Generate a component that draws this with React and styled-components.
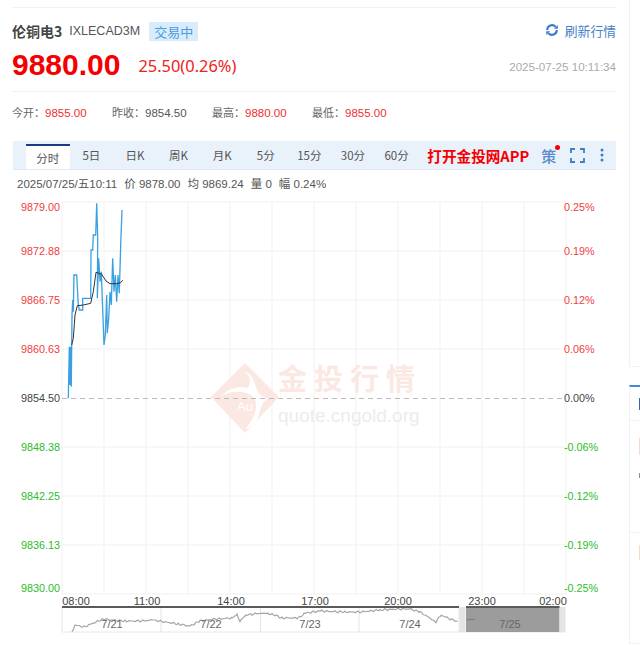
import React from "react";
import styled, { createGlobalStyle } from "styled-components";

const GlobalStyle = createGlobalStyle`
  html, body {
    margin: 0;
    background: #fff;
    font-family: "Microsoft YaHei", "Noto Sans CJK SC", "Liberation Sans", sans-serif;
  }
`;

const Page = styled.div`
  width: 640px;
  height: 645px;
  overflow: hidden;
  display: flex;
`;

const Main = styled.div`
  width: 604px;
  margin-left: 12px;
  flex-shrink: 0;
`;

const Head = styled.div`
  margin-top: 7px;
  border-top: 1px solid #f1f1f1;
  border-bottom: 1px solid #f0f0f0;
  height: 83px;
  display: flex;
  justify-content: space-between;
`;

const HeadLeft = styled.div`
  padding-top: 13px;
`;

const TitleRow = styled.div`
  display: flex;
  align-items: center;
  height: 20px;
`;

const Name = styled.span`
  font-size: 14px;
  font-weight: 700;
  color: #444;
`;

const Code = styled.span`
  font-family: "Liberation Sans", sans-serif;
  font-size: 12.5px;
  color: #555;
  margin-left: 7px;
`;

const Status = styled.span`
  margin-left: 9px;
  padding: 0 5px;
  height: 19px;
  line-height: 19px;
  font-size: 13px;
  color: #4a9be0;
  background: #d9ecfc;
`;

const PriceRow = styled.div`
  display: flex;
  align-items: center;
  margin-top: 7px;
  height: 34px;
`;

const Price = styled.span`
  font-family: "Liberation Sans", sans-serif;
  font-size: 30px;
  font-weight: 700;
  color: #f40000;
`;

const Change = styled.span`
  font-family: "Noto Sans", "Liberation Sans", sans-serif;
  font-size: 16.4px;
  color: #f02020;
  margin-left: 18px;
`;

const HeadRight = styled.div`
  display: flex;
  flex-direction: column;
  align-items: flex-end;
  padding-top: 12px;
`;

const Refresh = styled.div`
  display: flex;
  align-items: center;
  gap: 6px;
  height: 20px;
  font-size: 12.8px;
  color: #4a7fc9;
`;

const Stamp = styled.div`
  margin-top: 20px;
  font-family: "Liberation Sans", sans-serif;
  font-size: 11.6px;
  color: #aaa;
`;

const Stats = styled.div`
  display: flex;
  height: 40px;
  align-items: center;
  font-size: 11px;
  color: #666;
`;

const Stat = styled.div`
  width: 100px;
  white-space: nowrap;
`;

const StatValue = styled.span`
  font-family: "Liberation Sans", sans-serif;
  font-size: 11.5px;
  color: ${(p) => (p.$up ? "#f03030" : "#555")};
`;

const TabBar = styled.div`
  margin-top: 9px;
  margin-left: 1px;
  height: 28px;
  padding-left: 13px;
  display: flex;
  align-items: stretch;
  background: #e9f1fb;
  border-bottom: 1px solid #dfe8f4;
`;

const Tab = styled.div`
  width: 43.6px;
  flex-shrink: 0;
  box-sizing: border-box;
  display: flex;
  align-items: center;
  justify-content: center;
  font-size: 11.5px;
  color: #555;
  margin-top: 3px;
  border-top: 2px solid ${(p) => (p.$active ? "#1c3a86" : "transparent")};
  background: ${(p) => (p.$active ? "#fff" : "transparent")};
  padding-bottom: ${(p) => (p.$active ? "0" : "5px")};
  font-family: "Noto Sans CJK SC", "Liberation Sans", sans-serif;
`;

const AppLink = styled.div`
  margin-left: 9px;
  display: flex;
  align-items: center;
  font-size: 14.6px;
  font-weight: 700;
  color: #f40000;
  white-space: nowrap;
`;

const Strategy = styled.div`
  position: relative;
  margin-left: 12px;
  display: flex;
  align-items: center;
  font-size: 15px;
  font-weight: 500;
  color: #5a8ccb;
`;

const Dot = styled.i`
  position: absolute;
  top: 4px;
  right: -4px;
  width: 5px;
  height: 5px;
  border-radius: 50%;
  background: #f40000;
`;

const IconCell = styled.div`
  display: flex;
  align-items: center;
  margin-left: ${(p) => p.$gap}px;
`;

const Quote = styled.div`
  height: 25px;
  padding-left: 5px;
  display: flex;
  align-items: center;
  gap: 7px;
  font-family: "Liberation Sans", "Noto Sans CJK SC", sans-serif;
  font-size: 11.5px;
  color: #555;
  white-space: nowrap;
`;

const Chart = styled.svg`
  display: block;
  margin-left: -12px;
  width: 600px;
  height: 445px;
  overflow: visible;
`;

const Side = styled.div`
  margin-left: 13px;
  flex: 1;
  display: flex;
  flex-direction: column;
  justify-content: space-between;
`;

const SideTop = styled.div`
  height: 367px;
  box-sizing: border-box;
  border-left: 1px solid #f1f1f1;
  border-bottom: 1px solid #f1f1f1;
`;

const SideCard = styled.div`
  height: 259px;
  margin-bottom: 1px;
  box-sizing: border-box;
  border: 1px solid #f1f1f1;
  border-top: 2px solid #4a86d8;
  border-right: none;
  overflow: hidden;
`;

const SideItem = styled.div`
  height: ${(p) => p.$h}px;
  border-bottom: ${(p) => (p.$line ? "1px solid #f1f1f1" : "none")};
  padding-left: 9px;
  overflow: hidden;
`;

const Blob = styled.div`
  width: 4px;
  height: ${(p) => p.$h}px;
  margin-top: ${(p) => p.$t}px;
  background: ${(p) => p.$c};
`;

const yLabels = [
  ["9879.00", 207, "#f04040", "0.25%"],
  ["9872.88", 251, "#f04040", "0.19%"],
  ["9866.75", 299.5, "#f04040", "0.12%"],
  ["9860.63", 348.5, "#f04040", "0.06%"],
  ["9854.50", 398, "#444", "0.00%"],
  ["9848.38", 446.5, "#2cbc2c", "-0.06%"],
  ["9842.25", 495.5, "#2cbc2c", "-0.12%"],
  ["9836.13", 544.5, "#2cbc2c", "-0.19%"],
  ["9830.00", 588, "#2cbc2c", "-0.25%"],
];

const xLabels = [
  ["08:00", 76],
  ["11:00", 147],
  ["14:00", 231],
  ["17:00", 315],
  ["20:00", 398],
  ["23:00", 482],
  ["02:00", 553],
];

const days = [
  ["7/21", 112],
  ["7/22", 211],
  ["7/23", 310],
  ["7/24", 410],
  ["7/25", 510],
];

const bluePts =
  "205,610 208,455 210,570 212,455 214,575 216,360 218,315 220,350 222,240 230,240 235,330 238,345 248,345 248,310 272,310 273,165 278,165 280,120 287,120 290,25 293,130 292,310 296,190 300,260 304,230 308,345 312,450 316,420 320,300 322,415 326,370 330,290 334,330 338,190 342,290 346,240 350,320 354,240 358,295 362,150 366,45";
const avgPts =
  "215,450 220,430 225,360 232,332 250,330 272,325 280,290 288,232 305,238 318,258 330,266 350,266 362,263 368,256";

// points were read off the 3x crop, so scale them back to page pixels
const scale = (pts) =>
  pts
    .split(" ")
    .map((p) => {
      const [x, y] = p.split(",").map(Number);
      return `${(x / 3).toFixed(1)},${(195 + y / 3).toFixed(1)}`;
    })
    .join(" ");

const navKeys = [
  [72, 632], [75, 625], [84, 627], [96, 622], [103, 619], [112, 620], [125, 621], [140, 621], [153, 620],
  [165, 622], [178, 624], [190, 626], [200, 621], [215, 619], [232, 618], [237, 615], [240, 621], [246, 615],
  [262, 613], [272, 614], [282, 618], [298, 618], [306, 613], [320, 611], [345, 612], [360, 612], [380, 610],
  [398, 609], [410, 609], [420, 612], [433, 620], [436, 622], [441, 615], [450, 619], [459, 622],
];

// the overview line is noisy, so add a small fixed wobble between the key points
const navPts = (() => {
  const out = [];
  for (let i = 0; i < navKeys.length - 1; i++) {
    const [x0, y0] = navKeys[i];
    const [x1, y1] = navKeys[i + 1];
    for (let x = x0; x < x1; x += 1.5) {
      const y = y0 + ((y1 - y0) * (x - x0)) / (x1 - x0);
      out.push(`${x.toFixed(1)},${(y + Math.sin(x * 2.3) * Math.cos(x * 0.9) * 1.1).toFixed(1)}`);
    }
  }
  return out.join(" ");
})();

const RefreshIcon = () => (
  <svg width="14" height="14" viewBox="0 0 16 16" fill="none">
    <path d="M2.5 8a5.5 5.5 0 0 1 9.6-3.7" stroke="#3a78c9" strokeWidth="2.4" />
    <path d="M13.5 8a5.5 5.5 0 0 1-9.6 3.7" stroke="#3a78c9" strokeWidth="2.4" />
    <path d="M14.6 2.2v4.4h-4.4zM1.4 13.8V9.4h4.4z" fill="#3a78c9" />
  </svg>
);

const FullScreen = () => (
  <svg width="15" height="15" viewBox="0 0 15 15" fill="none" stroke="#3f7cc9" strokeWidth="1.8">
    <path d="M1 5V1h4M10 1h4v4M14 10v4h-4M5 14H1v-4" />
  </svg>
);

const Kebab = () => (
  <svg width="4" height="14" viewBox="0 0 4 14" fill="#3f7cc9">
    <circle cx="2" cy="2" r="1.5" />
    <circle cx="2" cy="7" r="1.5" />
    <circle cx="2" cy="12" r="1.5" />
  </svg>
);

const Watermark = () => (
  <g>
    <path d="M245 363 L279 397 L245 433 L211 397 Z" fill="#fbe8e3" />
    <path d="M222 396 C228 388 240 386 248 388 C252 380 250 376 245 372 C254 374 254 384 258 392 C260 396 264 398 268 398 C262 402 260 410 258 418 C255 424 250 428 245 430 C252 420 260 408 254 398 C248 390 230 390 222 396 Z" fill="#fff" />
    <text x="245" y="411" textAnchor="middle" fontSize="12.5" fill="#fff" fontFamily="Liberation Sans">Au</text>
    <text x="278" y="390" fontSize="29" letterSpacing="7" fill="#fbe8e3" fontFamily="Noto Sans CJK SC" fontWeight="700">金投行情</text>
    <text x="278" y="422" fontSize="19" fill="#ececec" fontFamily="Liberation Sans">quote.cngold.org</text>
  </g>
);

const App = () => (
  <Page>
    <GlobalStyle />
    <Main>
      <Head>
        <HeadLeft>
          <TitleRow>
            <Name>伦铜电3</Name>
            <Code>IXLECAD3M</Code>
            <Status>交易中</Status>
          </TitleRow>
          <PriceRow>
            <Price>9880.00</Price>
            <Change>25.50(0.26%)</Change>
          </PriceRow>
        </HeadLeft>
        <HeadRight>
          <Refresh>
            <RefreshIcon />
            刷新行情
          </Refresh>
          <Stamp>2025-07-25 10:11:34</Stamp>
        </HeadRight>
      </Head>
      <Stats>
        <Stat>今开：<StatValue $up>9855.00</StatValue></Stat>
        <Stat>昨收：<StatValue>9854.50</StatValue></Stat>
        <Stat>最高：<StatValue $up>9880.00</StatValue></Stat>
        <Stat>最低：<StatValue $up>9855.00</StatValue></Stat>
      </Stats>
      <TabBar>
        {["分时", "5日", "日K", "周K", "月K", "5分", "15分", "30分", "60分"].map((t, i) => (
          <Tab key={t} $active={i === 0}>{t}</Tab>
        ))}
        <AppLink>打开金投网APP</AppLink>
        <Strategy>
          策
          <Dot />
        </Strategy>
        <IconCell $gap={14}><FullScreen /></IconCell>
        <IconCell $gap={15}><Kebab /></IconCell>
      </TabBar>
      <Quote>
        <span>2025/07/25/五10:11</span>
        <span>价 9878.00</span>
        <span>均 9869.24</span>
        <span>量 0</span>
        <span>幅 0.24%</span>
      </Quote>
      <Chart viewBox="0 195 600 445">
        {yLabels.map((_, i) => (
          <line key={i} x1="62" x2="566" y1={202 + i * 49} y2={202 + i * 49} stroke={i === 4 ? "none" : "#f1f1f1"} />
        ))}
        {Array.from({ length: 13 }, (_, i) => (
          <line key={i} x1={62 + i * 42} x2={62 + i * 42} y1="202" y2="594" stroke="#f1f1f1" />
        ))}
        <Watermark />
        <line x1="62" x2="566" y1="398.5" y2="398.5" stroke="#bbb" strokeDasharray="5 4" />
        <polyline points={scale(bluePts)} fill="none" stroke="#3aa0e0" strokeWidth="1.3" />
        <polyline points={scale(avgPts)} fill="none" stroke="#333" strokeWidth="1" />
        <g fontFamily="Liberation Sans" fontSize="10.8">
          {yLabels.map(([left, y, color, right]) => (
            <g key={left} fill={color}>
              <text x="60" y={y + 4} textAnchor="end">{left}</text>
              <text x="564" y={y + 4}>{right}</text>
            </g>
          ))}
          {xLabels.map(([t, x]) => (
            <text key={t} x={x} y="605" textAnchor="middle" fill="#444" fontSize="11">{t}</text>
          ))}
        </g>
        <rect x="62" y="606" width="504" height="26" fill="#fff" />
        <line x1="62" x2="566" y1="632" y2="632" stroke="#e8e8e8" />
        <line x1="62" x2="62" y1="607" y2="632" stroke="#e8e8e8" />
        {[161, 260.5, 359, 459].map((x) => (
          <line key={x} x1={x} x2={x} y1="607" y2="632" stroke="#e4e4e4" />
        ))}
        <polyline points={navPts} fill="none" stroke="#a6a6a6" strokeWidth="1.2" />
        <rect x="466" y="607" width="93.5" height="25" fill="#9c9c9c" />
        <rect x="459.5" y="607" width="6" height="25" fill="#e4e4e6" />
        <rect x="559.5" y="607" width="6" height="25" fill="#e4e4e6" />
        <rect x="62" y="606" width="397" height="2" fill="#5a5a5a" />
        <rect x="466" y="606" width="93.5" height="2" fill="#5a5a5a" />
        <path d="M467 620 l3 -1 l2 1 l3 -1" stroke="#777" fill="none" />
        {days.map(([d, x]) => (
          <text key={d} x={x} y="628" textAnchor="middle" fontSize="11" fontFamily="Liberation Sans" fill="#666">{d}</text>
        ))}
      </Chart>
    </Main>
    <Side>
      <SideTop />
      <SideCard>
        <SideItem $h={33} $line>
          <Blob $h={12} $t={11} $c="#3c63a8" />
        </SideItem>
        <SideItem $h={111} $line>
          <Blob $h={17} $t={17} $c="#fbd9c8" />
          <Blob $h={5} $t={18} $c="#a88a62" />
        </SideItem>
        <SideItem $h={100}>
          <Blob $h={15} $t={12} $c="#fbd9c8" />
        </SideItem>
      </SideCard>
    </Side>
  </Page>
);

export default App;
